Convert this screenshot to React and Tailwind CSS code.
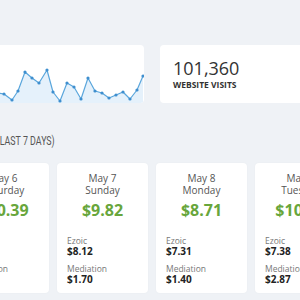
import React from 'react'

// ── Chart data (page coords, shifted into the card) ───────────────────────────
const RAW = [
  [-42, 84], [-38, 80], [-31, 90], [-24, 85], [-17, 95], [-10, 88], [-3, 93],
  [4, 94], [12, 100], [18, 91], [25, 72], [32, 78], [39, 83], [47, 70],
  [53, 92], [60, 101], [67, 83], [74, 87], [81, 99], [88, 78], [95, 91],
  [102, 93], [109, 98], [116, 95], [123, 92], [130, 99], [137, 90], [143, 76],
]
const PTS = RAW.map(([x, y]) => [x + 42, y - 45])

const DAYS = [
  { date: 'May 6', day: 'Saturday', total: '$10.39', ezoic: '$8.52', med: '$1.87' },
  { date: 'May 7', day: 'Sunday', total: '$9.82', ezoic: '$8.12', med: '$1.70' },
  { date: 'May 8', day: 'Monday', total: '$8.71', ezoic: '$7.31', med: '$1.40' },
  { date: 'May 9', day: 'Tuesday', total: '$10.25', ezoic: '$7.38', med: '$2.87' },
]

function Sparkline() {
  const line = PTS.map(([x, y], i) => `${i ? 'L' : 'M'}${x},${y}`).join(' ')
  const area = `${line} L${PTS[PTS.length - 1][0]},58 L${PTS[0][0]},58 Z`
  return (
    <svg width="186" height="58" viewBox="0 0 186 58" className="block">
      <path d={area} fill="#e5f1fb" />
      <path d={line} fill="none" stroke="#5aa6dc" strokeWidth="1.2" strokeLinejoin="round" />
      {PTS.map(([x, y], i) => (
        <circle key={i} cx={x} cy={y} r="1.6" fill="#3f8fcf" />
      ))}
    </svg>
  )
}

function DayCard({ date, day, total, ezoic, med }) {
  return (
    <div className="w-[91px] h-[130px] shrink-0 bg-white rounded-[4px] shadow-[0_0_2px_rgba(0,0,0,0.04)] pt-[9px] px-[10px]">
      <div className="text-center text-[10px] leading-[12px] text-[#555]">
        <div>{date}</div>
        <div>{day}</div>
      </div>
      <div className="mt-[4px] text-center text-[16px] leading-[20px] font-bold text-[#68a63c]">
        {total}
      </div>
      <div className="mt-[16px] text-[8.5px] leading-[10px] text-[#777]">Ezoic</div>
      <div className="text-[10px] leading-[10px] font-bold text-[#222]">{ezoic}</div>
      <div className="mt-[8px] text-[8.5px] leading-[10px] text-[#777]">Mediation</div>
      <div className="text-[10px] leading-[10px] font-bold text-[#222]">{med}</div>
    </div>
  )
}

export default function App() {
  return (
    <div className="w-[300px] h-[300px] overflow-hidden bg-[#eff2f6] font-['Open_Sans',sans-serif]">
      <div className="ml-[-42px] pt-[45px]">

        {/* ── Top row ── */}
        <div className="flex gap-[16px]">
          <div className="w-[186px] h-[58px] shrink-0 bg-white rounded-[4px] overflow-hidden">
            <Sparkline />
          </div>
          <div className="w-[200px] h-[58px] shrink-0 bg-white rounded-[4px] pt-[12px] pl-[13px]">
            <div className="text-[18px] leading-[22px] text-[#333]">101,360</div>
            <div className="text-[8.5px] leading-[10px] font-bold text-[#333] mt-[1px]">WEBSITE VISITS</div>
          </div>
        </div>

        {/* ── Heading ── */}
        <div className="mt-[24px] ml-[-6px] h-[16px] whitespace-nowrap">
          <span className="inline-block origin-left scale-x-[0.68] font-['Roboto',sans-serif] text-[13px] leading-[16px] text-[#555]">
            EARNINGS (LAST 7 DAYS)
          </span>
        </div>

        {/* ── Day cards ── */}
        <div className="mt-[20px] flex gap-[8px]">
          {DAYS.map((d) => <DayCard key={d.date} {...d} />)}
        </div>
      </div>
    </div>
  )
}
